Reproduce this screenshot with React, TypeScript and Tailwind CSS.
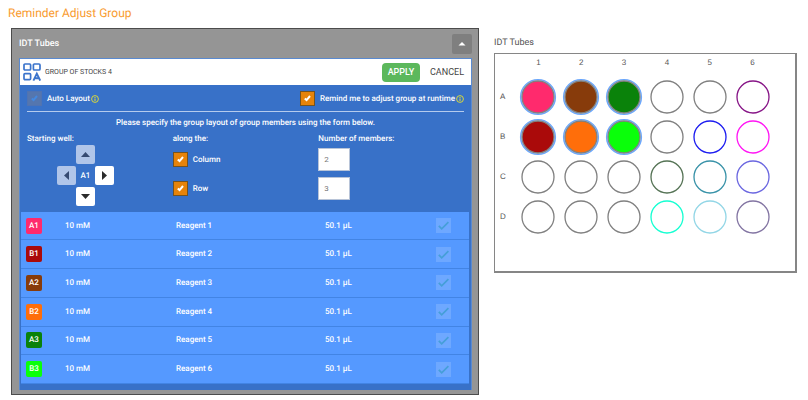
import React, { useState } from 'react';
import clsx from 'clsx';

interface Reagent {
  well: string;
  name: string;
  color: string;
  fill: string;
}

interface CheckBoxProps {
  id: string;
  checked: boolean;
  disabled?: boolean;
  onChange?: (checked: boolean) => void;
}

const reagents: Reagent[] = [
  { well: 'A1', name: 'Reagent 1', color: 'bg-[#ff2a6d]', fill: '#ff2a6d' },
  { well: 'B1', name: 'Reagent 2', color: 'bg-[#aa0a0a]', fill: '#aa0a0a' },
  { well: 'A2', name: 'Reagent 3', color: 'bg-[#873b0b]', fill: '#873b0b' },
  { well: 'B2', name: 'Reagent 4', color: 'bg-[#ff6e0a]', fill: '#ff6e0a' },
  { well: 'A3', name: 'Reagent 5', color: 'bg-[#0a820a]', fill: '#0a820a' },
  { well: 'B3', name: 'Reagent 6', color: 'bg-[#0aff0a]', fill: '#0aff0a' },
];

const plateColumns = [1, 2, 3, 4, 5, 6];

const empty = '#808080';

const plateRows = [
  { label: 'A', outlines: [empty, empty, empty, empty, empty, '#861486'] },
  { label: 'B', outlines: [empty, empty, empty, empty, '#1c1cf0', '#ff14f4'] },
  { label: 'C', outlines: [empty, empty, empty, '#557355', '#3892a8', '#6a66e0'] },
  { label: 'D', outlines: [empty, empty, empty, '#14ffd2', '#92d6e6', '#8274a2'] },
];

const CheckBox: React.FC<CheckBoxProps> = ({ id, checked, disabled, onChange }) => (
  <span className="relative block size-[15px] shrink-0">
    <input
      id={id}
      type="checkbox"
      checked={checked}
      disabled={disabled}
      onChange={e => onChange?.(e.target.checked)}
      className={clsx(
        'block size-full appearance-none border',
        disabled ? 'border-[#5073b2] bg-[#5576ae]' : 'border-[#75531f] bg-[#e6830a]'
      )}
    />
    {checked && (
      <svg
        viewBox="0 0 15 15"
        className={clsx('pointer-events-none absolute inset-0', disabled ? 'text-[#4388e0]' : 'text-white')}
      >
        <path d="M4.8 7.4l1.8 1.7L10 5" fill="none" stroke="currentColor" strokeWidth="2" />
      </svg>
    )}
  </span>
);

const InfoIcon: React.FC = () => (
  <svg viewBox="0 0 8 8" className="size-2 shrink-0 text-[#d8d83c]">
    <circle cx="4" cy="4" r="3.4" fill="none" stroke="currentColor" strokeWidth="1" />
    <path d="M4 3.5v2.4M4 1.9v1" stroke="currentColor" strokeWidth="1.1" />
  </svg>
);

const GroupIcon: React.FC = () => (
  <svg viewBox="0 0 18 18" className="size-[18px] text-[#3b74cc]" fill="none" stroke="currentColor" strokeWidth="1.7">
    <rect x="1" y="1" width="6.6" height="6" rx="1" />
    <rect x="10.4" y="1" width="6.6" height="6" rx="1" />
    <rect x="1" y="10.6" width="6.6" height="6" rx="1" />
    <path d="M10.4 17.6L13.8 10.6L17.2 17.6M11.6 15.3h4.4" strokeWidth="1.9" />
  </svg>
);

const arrowPaths = {
  up: 'M5 12L9.5 7L14 12z',
  down: 'M5 7L9.5 12L14 7z',
  left: 'M12 5L7 9.5L12 14z',
  right: 'M7 5L12 9.5L7 14z',
};

const ArrowButton: React.FC<{ direction: keyof typeof arrowPaths; disabled?: boolean; className?: string }> = ({
  direction,
  disabled,
  className,
}) => (
  <button
    type="button"
    aria-label={`Move ${direction}`}
    disabled={disabled}
    className={clsx(
      'size-[19px] rounded-xs',
      disabled ? 'bg-[#b0c5e9] text-[#354a72]' : 'bg-white text-[#2b2b2b]',
      className
    )}
  >
    <svg viewBox="0 0 19 19" className="size-full">
      <path d={arrowPaths[direction]} fill="currentColor" />
    </svg>
  </button>
);

const GroupForm: React.FC = () => {
  const [remind, setRemind] = useState(true);
  const [byColumn, setByColumn] = useState(true);
  const [byRow, setByRow] = useState(true);
  const [columnMembers, setColumnMembers] = useState('2');
  const [rowMembers, setRowMembers] = useState('3');

  const numberInput = 'block h-[23px] w-8 border border-[#b8c4d8] bg-white px-[5px] text-[#777777] font-normal';

  return (
    <form className="px-[7px] pt-[6px] text-[8px] leading-3 font-medium text-white">
      <div className="flex items-center justify-between border-b border-[#b5cbed] pb-[5px]">
        <div className="flex items-center">
          <CheckBox id="auto-layout" checked disabled />
          <label htmlFor="auto-layout" className="mr-px ml-[5px]">Auto Layout</label>
          <InfoIcon />
        </div>
        <div className="flex items-center">
          <CheckBox id="remind" checked={remind} onChange={setRemind} />
          <label htmlFor="remind" className="mr-px ml-[5px]">Remind me to adjust group at runtime</label>
          <InfoIcon />
        </div>
      </div>

      <p className="mt-[5px] text-center">
        Please specify the group layout of group members using the form below.
      </p>

      <div className="mt-1 grid grid-cols-3 pb-[6px]">
        <div>
          <p>Starting well:</p>
          <div className="ml-[30px] grid w-[57px] grid-cols-3 grid-rows-3 items-center gap-y-[2px] text-center">
            <ArrowButton direction="up" disabled className="col-start-2" />
            <ArrowButton direction="left" disabled className="col-start-1 row-start-2" />
            <span className="row-start-2">A1</span>
            <ArrowButton direction="right" className="row-start-2" />
            <ArrowButton direction="down" className="col-start-2 row-start-3" />
          </div>
        </div>
        <div>
          <p>along the:</p>
          <div className="mt-[3px] flex h-[23px] items-center gap-[5px]">
            <CheckBox id="column" checked={byColumn} onChange={setByColumn} />
            <label htmlFor="column">Column</label>
          </div>
          <div className="mt-[6px] flex h-[23px] items-center gap-[5px]">
            <CheckBox id="row" checked={byRow} onChange={setByRow} />
            <label htmlFor="row">Row</label>
          </div>
        </div>
        <div>
          <p>Number of members:</p>
          <div className="mt-[3px] flex flex-col gap-[6px]">
            <input
              aria-label="Column members"
              className={numberInput}
              value={columnMembers}
              onChange={e => setColumnMembers(e.target.value)}
            />
            <input
              aria-label="Row members"
              className={numberInput}
              value={rowMembers}
              onChange={e => setRowMembers(e.target.value)}
            />
          </div>
        </div>
      </div>
    </form>
  );
};

const ReagentTable: React.FC = () => (
  <div className="pr-[2px] pb-[6px] pl-px">
    <table className="h-[172px] w-full table-fixed border-collapse bg-[#5599ff] text-[8px] leading-3 font-medium text-white">
      <colgroup>
        <col className="w-[44px]" />
        <col className="w-[111px]" />
        <col className="w-[149px]" />
        <col />
        <col className="w-[43px]" />
      </colgroup>
      <tbody>
        {reagents.map(reagent => (
          <tr key={reagent.well} className="border-b border-[#4284e4]">
            <td className="pl-[5px]">
              <span className={clsx('flex size-4 items-center justify-center rounded-xs', reagent.color)}>
                {reagent.well}
              </span>
            </td>
            <td>10 mM</td>
            <td>{reagent.name}</td>
            <td>50.1 µL</td>
            <td className="pl-[10px]">
              <span className="block size-[15px] bg-[#6ea8ff]">
                <svg viewBox="0 0 15 15" className="size-full">
                  <path d="M2.8 7.8l2.9 3L12.4 4.2" fill="none" stroke="#459fd8" strokeWidth="1.7" />
                </svg>
              </span>
            </td>
          </tr>
        ))}
      </tbody>
    </table>
  </div>
);

const Well: React.FC<{ outline: string; fill?: string }> = ({ outline, fill }) => (
  <svg viewBox="0 0 38 38" className="size-[38px] justify-self-center">
    {fill && <circle cx="19" cy="19" r="17.4" fill="#d3e4fb" stroke="#6ba7fb" strokeWidth="1.4" />}
    <circle cx="19" cy="19" r="16" fill={fill ?? 'none'} stroke={outline} strokeWidth="1.3" />
  </svg>
);

const Plate: React.FC = () => (
  <section className="w-[303px] pt-[9px] text-[#555555]">
    <h2 className="text-[9px] leading-3">IDT Tubes</h2>
    <div className="mt-1 border-t border-r-2 border-b-2 border-l border-[#868686] pr-[21px] pb-[34px] font-['Liberation_Sans',sans-serif] text-[8px] leading-4">
      <div className="grid grid-cols-[22px_repeat(6,1fr)] pt-px pb-[6px] text-center">
        <span />
        {plateColumns.map(column => (
          <span key={column}>{column}</span>
        ))}
      </div>
      {plateRows.map(row => (
        <div key={row.label} className="grid h-10 grid-cols-[22px_repeat(6,1fr)] items-center">
          <span className="pl-[5px]">{row.label}</span>
          {row.outlines.map((outline, index) => {
            const well = `${row.label}${index + 1}`;
            return <Well key={well} outline={outline} fill={reagents.find(r => r.well === well)?.fill} />;
          })}
        </div>
      ))}
    </div>
  </section>
);

const App: React.FC = () => {
  const [open, setOpen] = useState(true);

  return (
    <main className="min-h-screen bg-white font-[Roboto,sans-serif] [text-rendering:geometricPrecision]">
      <h1 className="px-2 pt-[5px] text-[12px] leading-4 text-[#f99b2e]">Reminder Adjust Group</h1>

      <div className="mt-[7px] flex items-start gap-[15px] px-[11px]">
        <section className="flex-1 border border-[#4c4c4c] bg-[#959595] pr-[6px] pb-1 pl-[7px]">
          <header className="flex h-[29px] items-center justify-between">
            <h2 className="text-[9px] leading-3 font-medium text-white">IDT Tubes</h2>
            <button
              type="button"
              aria-label="Toggle group"
              aria-expanded={open}
              onClick={() => setOpen(!open)}
              className="size-5 rounded-xs bg-[#7f7f7f] text-white"
            >
              <svg viewBox="0 0 20 20" className="size-full">
                <path d="M6.5 11.5L10 8L13.5 11.5z" fill="currentColor" />
              </svg>
            </button>
          </header>

          {open && (
            <div className="border-x border-t border-[#5a8ad0] bg-[#3871c8]">
              <div className="flex h-[26px] items-center bg-white px-[3px] text-[#444444]">
                <GroupIcon />
                <h3 className="ml-1 text-[7px] leading-3">GROUP OF STOCKS 4</h3>
                <button
                  type="button"
                  className="ml-auto h-[19px] w-[38px] rounded-sm bg-[#5cb85c] text-[9px] leading-3 font-medium text-white"
                >
                  APPLY
                </button>
                <button type="button" className="mr-1 ml-[10px] text-[9px] leading-3">CANCEL</button>
              </div>
              <GroupForm />
              <ReagentTable />
            </div>
          )}
        </section>

        <Plate />
      </div>
    </main>
  );
};

export default App;
